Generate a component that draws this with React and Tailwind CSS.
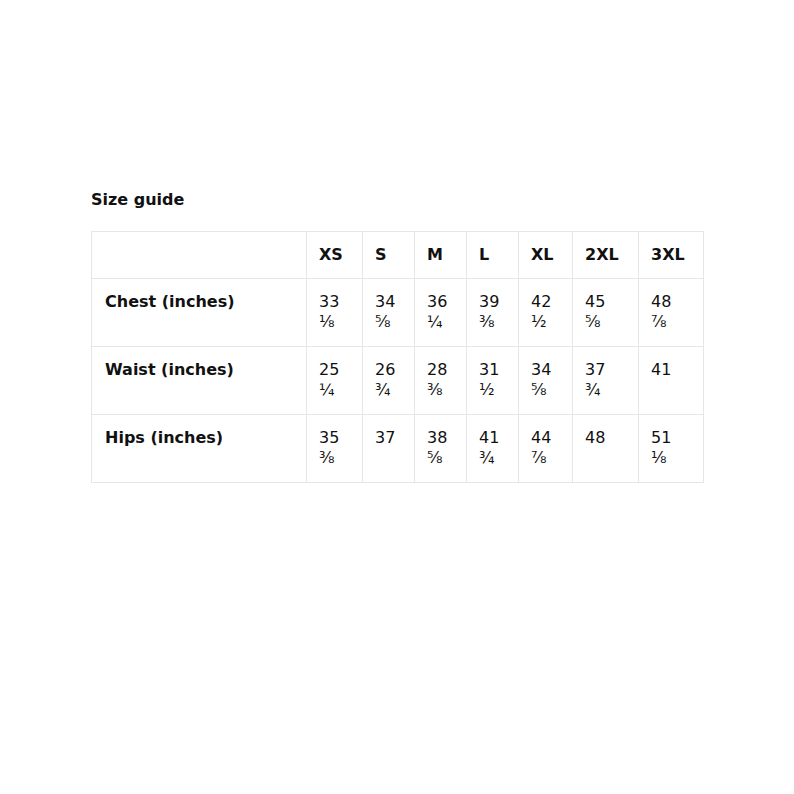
export default function App() {
  const sizes = ["XS", "S", "M", "L", "XL", "2XL", "3XL"];
  const rows = [
    ["Chest (inches)", [["33", "⅛"], ["34", "⅝"], ["36", "¼"], ["39", "⅜"], ["42", "½"], ["45", "⅝"], ["48", "⅞"]]],
    ["Waist (inches)", [["25", "¼"], ["26", "¾"], ["28", "⅜"], ["31", "½"], ["34", "⅝"], ["37", "¾"], ["41"]]],
    ["Hips (inches)", [["35", "⅜"], ["37"], ["38", "⅝"], ["41", "¾"], ["44", "⅞"], ["48"], ["51", "⅛"]]],
  ];
  const widths = [215, 56, 52, 52, 52, 54, 66, 65];
  return (
    <div className="min-h-[794px] bg-white pt-[190px] pl-[91px] text-[#111] text-[16px] leading-[20px]" style={{ fontFamily: '"DejaVu Sans", sans-serif' }}>
      <h2 className="font-bold mb-[21px]">Size guide</h2>
      <table className="table-fixed border-collapse w-[612px]">
        <colgroup>
          {widths.map((w, i) => (
            <col key={i} style={{ width: w }} />
          ))}
        </colgroup>
        <thead>
          <tr>
            <th className="border border-[#e6e6e6] px-[13px] py-[13px] text-left font-bold"></th>
            {sizes.map((s) => (
              <th key={s} className="border border-[#e6e6e6] px-[12px] py-[13px] text-left font-bold align-top">{s}</th>
            ))}
          </tr>
        </thead>
        <tbody>
          {rows.map(([label, vals]) => (
            <tr key={label}>
              <td className="border border-[#e6e6e6] px-[13px] py-[13px] h-[68px] font-bold align-top">{label}</td>
              {vals.map((v, i) => (
                <td key={i} className="border border-[#e6e6e6] px-[12px] py-[13px] align-top">
                  <div>{v[0]}</div>
                  {v[1] && <div>{v[1]}</div>}
                </td>
              ))}
            </tr>
          ))}
        </tbody>
      </table>
    </div>
  );
}
